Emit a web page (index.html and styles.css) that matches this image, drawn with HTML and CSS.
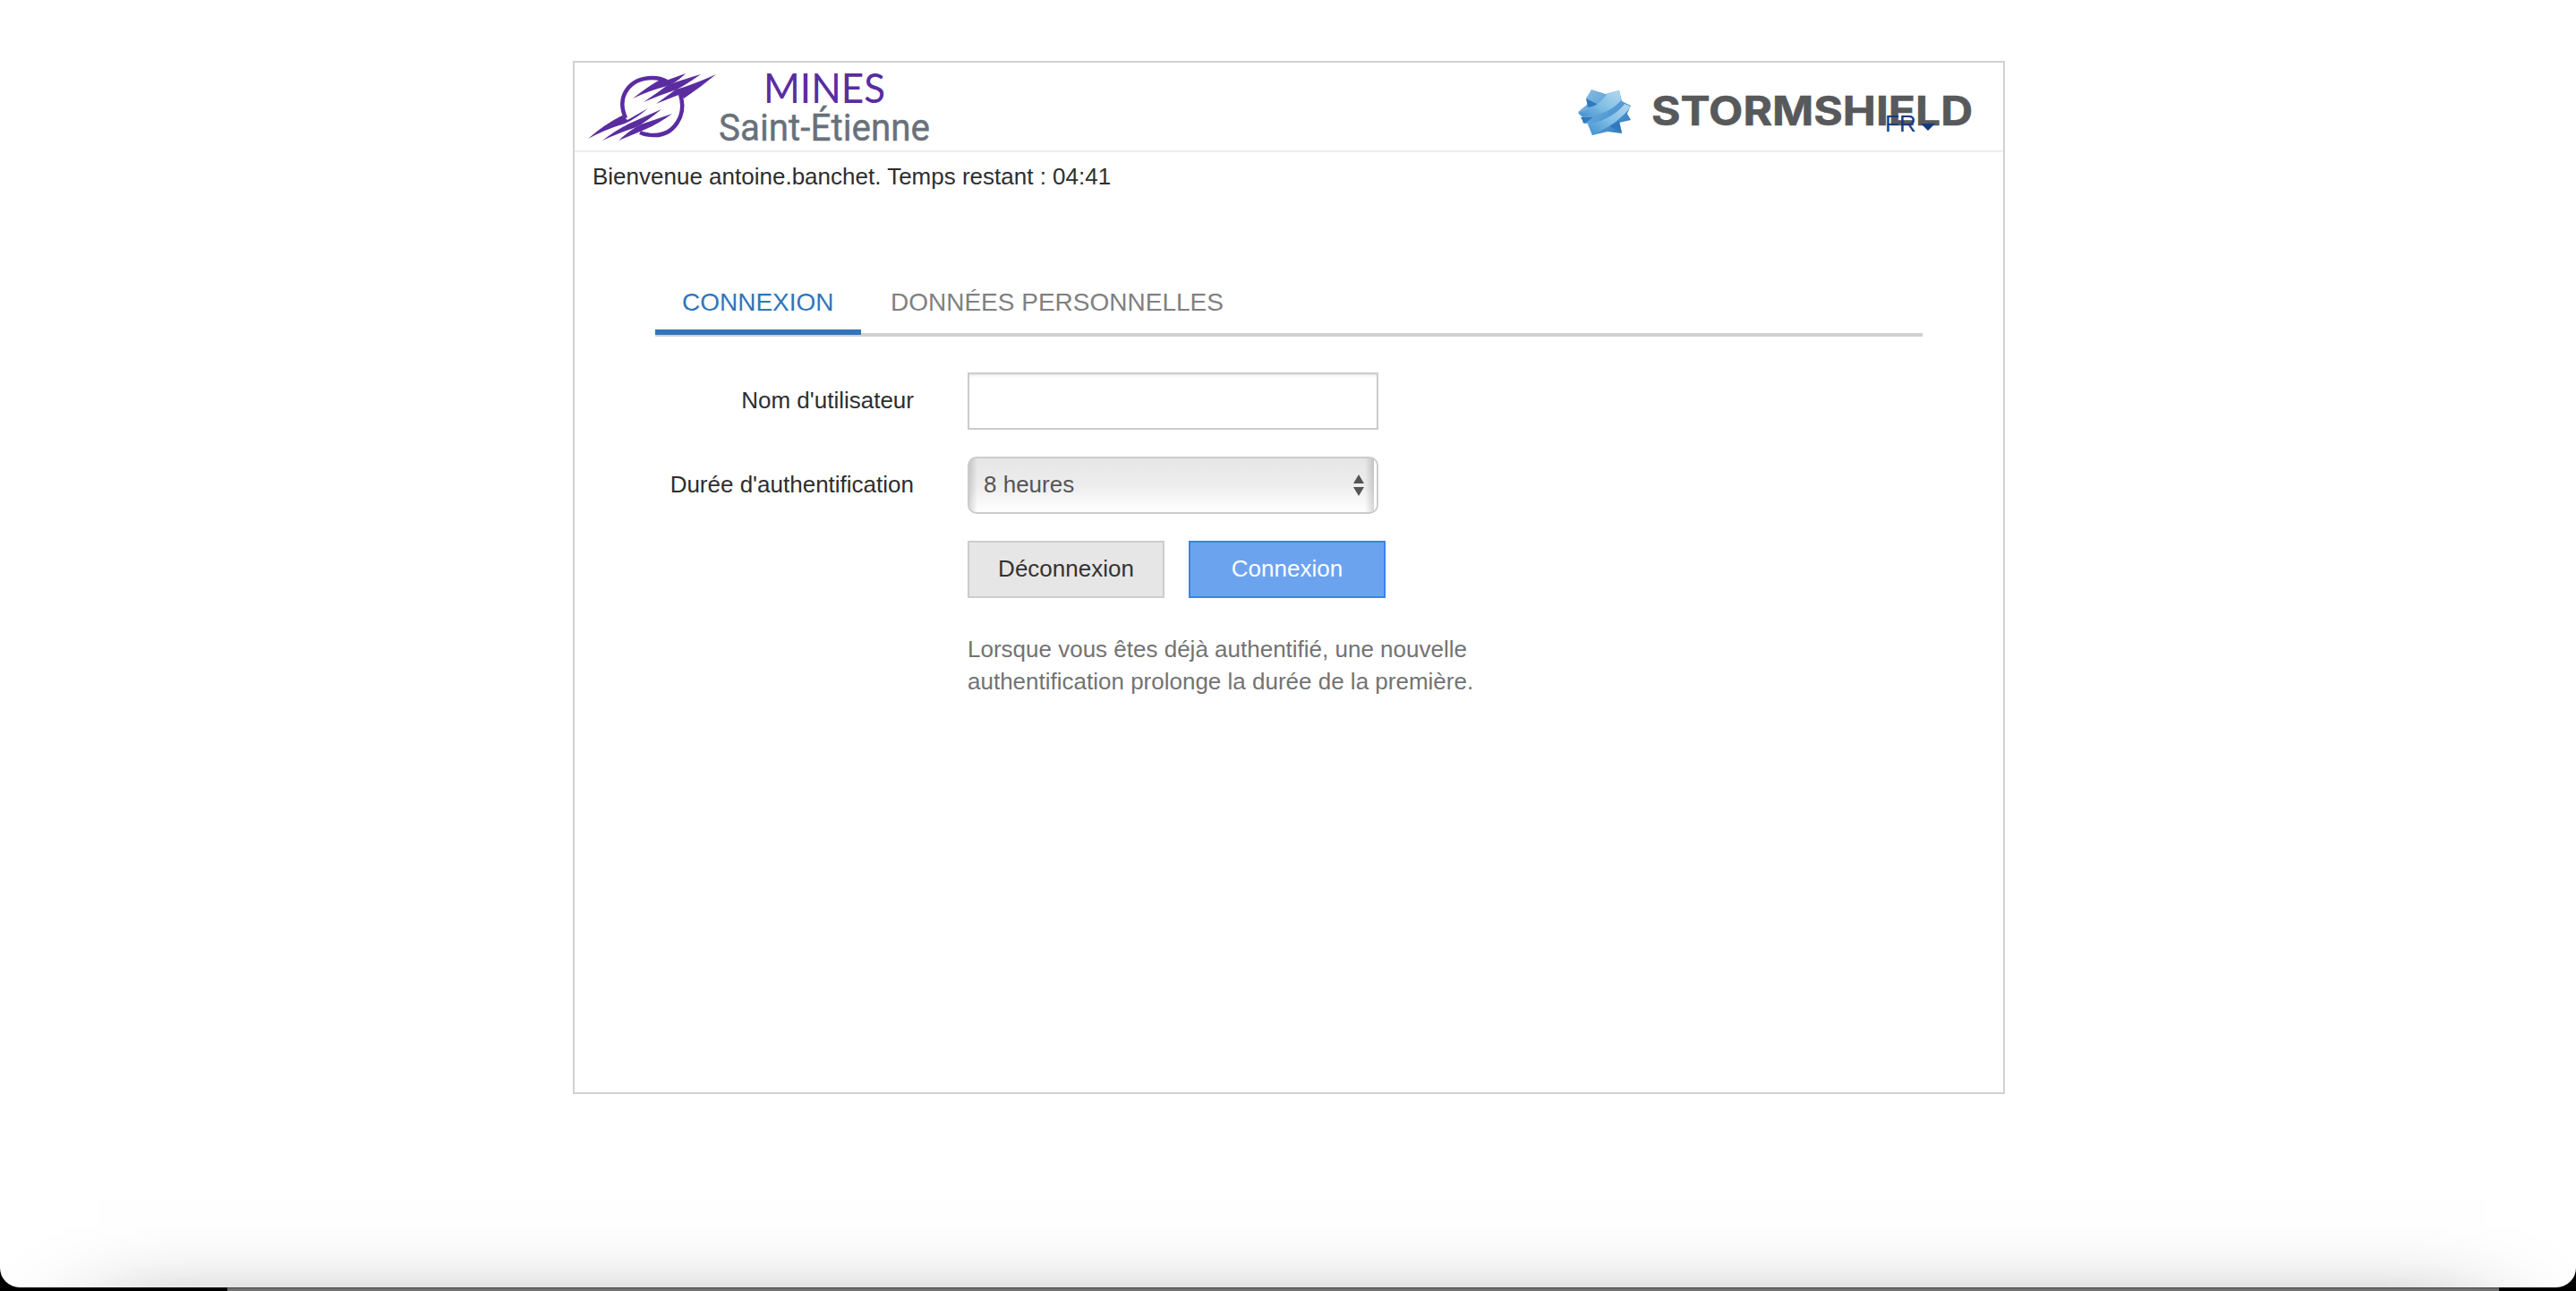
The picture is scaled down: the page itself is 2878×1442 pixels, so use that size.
FILE: index.html
```html
<!DOCTYPE html>
<html lang="fr">
<head>
<meta charset="utf-8">
<title>Portail captif</title>
<link rel="stylesheet" href="styles.css">
</head>
<body>
<div class="window">
  <main class="panel">
    <header class="header">
      <svg class="logo-mines" width="420" height="96" viewBox="642 70 420 96">
        <g fill="none" stroke="#5a2ca0">
          <path stroke-width="4.5" d="M699 132C688 107 704 87 729 87Q738 87 745 91M760 105C768 130 752 151 731 151Q722 151 715 148"/>
        </g>
        <g fill="#5a2ca0">
          <path d="M707 110Q722 98 734 91Q738 88 744 90L766 82Q754 94 742 97Q726 101 707 110Z"/>
          <path d="M719 114Q734 104 746 95Q762 89 783 83Q769 93 756 100Q738 106 719 114Z"/>
          <path d="M733 116Q744 108 755 100Q776 94 800 83Q782 98 764 110L761 105Q750 109 733 116Z"/>
          <path d="M657 155Q675 139 695 129L701 134L724 121Q710 133 698 138Q675 145 657 155Z"/>
          <path d="M673 157Q687 146 703 138L739 122Q722 136 711 142Q690 149 673 157Z"/>
          <path d="M691 157Q704 145 716 139L751 127Q736 138 722 144Q708 150 691 157Z"/>
        </g>
        <text class="mines" x="853" y="115" textLength="136" lengthAdjust="spacingAndGlyphs">MINES</text>
        <text class="etienne" x="803" y="157" textLength="236" lengthAdjust="spacingAndGlyphs">Saint-Étienne</text>
      </svg>
      <svg class="logo-storm" width="480" height="96" viewBox="1740 70 480 96">
        <defs>
          <linearGradient id="band-a" x1="0" y1="1" x2="1" y2="0">
            <stop offset="0" stop-color="#3f8fce"/><stop offset=".5" stop-color="#82bfe5"/><stop offset="1" stop-color="#b4d9ef"/>
          </linearGradient>
          <linearGradient id="band-b" x1="0" y1="0" x2="1" y2="1">
            <stop offset="0" stop-color="#8fbfe4"/><stop offset=".5" stop-color="#5a9fd6"/><stop offset="1" stop-color="#2a73bd"/>
          </linearGradient>
        </defs>
        <path fill="url(#band-b)" d="M1778 100L1794 105L1809 101L1812 113L1822 118L1818 127L1822 134L1809 137L1812 149L1796 147L1779 151L1776 139L1768 137L1770 130L1763 125L1774 116L1772 110Z"/>
        <path fill="#2f79bf" d="M1772 110L1786 117L1774 120ZM1766 131L1780 131L1770 138ZM1798 141L1809 135L1812 148Z"/>
        <path fill="url(#band-a)" d="M1763 126Q1786 120 1796 104L1809 101L1811 112Q1798 128 1768 131Z"/>
        <path fill="url(#band-a)" d="M1774 139Q1802 133 1815 116L1822 119Q1808 138 1779 151Z"/>
        <text class="storm" x="1845" y="140" textLength="359" lengthAdjust="spacingAndGlyphs">STORMSHIELD</text>
      </svg>
      <div class="lang"><span>FR</span><i class="caret"></i></div>
    </header>
    <p class="welcome">Bienvenue antoine.banchet. Temps restant : 04:41</p>
    <nav class="tabs">
      <a class="tab active">CONNEXION</a>
      <a class="tab">DONNÉES PERSONNELLES</a>
    </nav>
    <form class="form">
      <label class="label">Nom d'utilisateur</label>
      <div class="field"></div>
      <label class="label">Durée d'authentification</label>
      <div class="select"><span>8 heures</span>
        <svg width="12" height="24" viewBox="0 0 12 24"><path fill="#555" d="M6 0L12 10H0ZM0 14H12L6 24Z"/></svg>
      </div>
      <div class="actions">
        <button type="button" class="btn">Déconnexion</button>
        <button type="button" class="btn primary">Connexion</button>
      </div>
      <p class="help">Lorsque vous êtes déjà authentifié, une nouvelle<br>authentification prolonge la durée de la première.</p>
    </form>
  </main>
  <div class="window-shadow"></div>
</div>
<div class="next-window"></div>
</body>
</html>
```
FILE: styles.css
```css
* { box-sizing: border-box; }
body {
  margin: 0;
  height: 1442px;
  overflow: hidden;
  background: #000;
  color: #2e2e2e;
  font: 26px/36px "Liberation Sans", Arial, sans-serif;
}
p { margin: 0; }
.window {
  position: relative;
  height: 1438px;
  padding-top: 68px;
  overflow: hidden;
  border-radius: 0 0 22px 22px;
  background: #fff;
}
.panel {
  width: 1600px;
  height: 1154px;
  margin-left: 640px;
  border: 2px solid #d1d1d1;
}
.header {
  position: relative;
  display: flex;
  justify-content: space-between;
  height: 100px;
  padding-right: 18px;
  border-bottom: 2px solid #ededed;
}
.mines { font: 400 47px Lato, sans-serif; fill: #5a2ca0; }
.etienne { font: 400 42px Roboto, sans-serif; fill: #68717a; stroke: #68717a; stroke-width: .4; }
.storm { font: 700 45px Inter, sans-serif; fill: #58595b; stroke: #58595b; stroke-width: .6; }
.lang {
  position: absolute;
  left: 1464px;
  top: 50px;
  display: flex;
  align-items: center;
  gap: 5px;
  color: #163a80;
}
.caret {
  margin-top: 8px;
  border: 8px solid transparent;
  border-top-color: #163a80;
  border-bottom: 0;
}
.welcome { padding: 9px 0 0 20px; }
.tabs {
  display: flex;
  width: 1416px;
  height: 66px;
  margin: 95px 0 0 90px;
  border-bottom: 4px solid #d1d1d1;
}
.tab {
  height: 64px;
  padding: 10px 32px 0 33px;
  color: #808080;
  font-size: 28px;
}
.tab.active {
  width: 230px;
  padding-left: 30px;
  padding-right: 0;
  color: #3075bb;
  border-bottom: 6px solid #3075bb;
}
.form {
  display: grid;
  grid-template-columns: 379px 467px;
  column-gap: 60px;
  row-gap: 30px;
  align-items: center;
  margin-top: 40px;
}
.label { text-align: right; padding-bottom: 2px; }
.field, .select {
  width: 459px;
  height: 64px;
  border: 2px solid #ccc;
}
.field { box-shadow: inset 0 3px 4px -2px rgba(0,0,0,.12); }
.select {
  display: flex;
  align-items: center;
  justify-content: space-between;
  padding: 0 14px 2px 16px;
  border-radius: 10px;
  color: #555;
  background:
    linear-gradient(90deg, rgba(0,0,0,.14), transparent 9px, transparent 442px, rgba(0,0,0,.16) 452px, #fff 452px),
    linear-gradient(#e6e6e6, #ededed 50%, #fff);
}
.select svg { margin-top: 1px; }
.actions { grid-column: 2; display: flex; gap: 27px; }
.btn {
  width: 220px;
  height: 64px;
  padding: 0 0 2px;
  border: 2px solid #ccc;
  background: #e6e6e6;
  color: #333;
  font: inherit;
}
.btn.primary {
  border-color: #3b82ed;
  background: #6ca3ef;
  color: #fff;
}
.help {
  grid-column: 2;
  margin-top: 9px;
  white-space: nowrap;
  color: #737373;
}
.window-shadow {
  position: absolute;
  left: 110px;
  top: 1438px;
  width: 2668px;
  height: 900px;
  box-shadow: 0 66px 110px rgba(0,0,0,.9);
}
.next-window {
  width: 2538px;
  height: 4px;
  margin-left: 254px;
  border-top: 1px solid #444;
  background: #707070;
}
```
